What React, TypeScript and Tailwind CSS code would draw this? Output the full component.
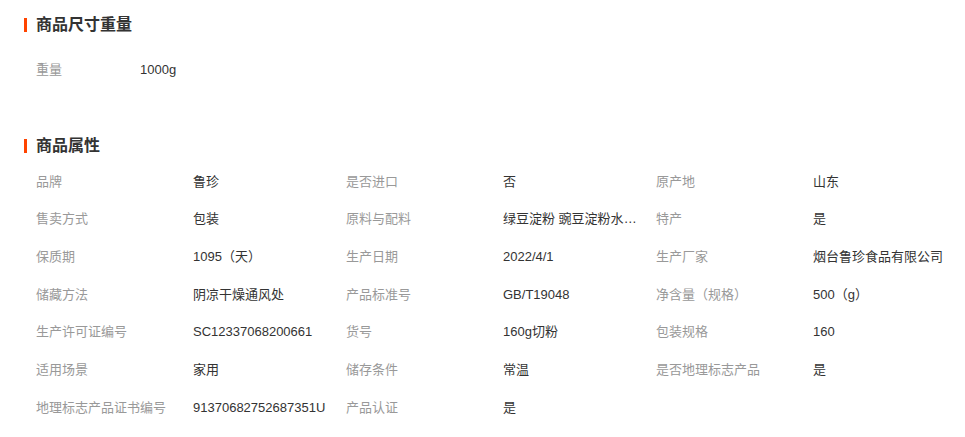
import React from "react";

const font = { fontFamily: '"Liberation Sans", "Noto Sans CJK SC", sans-serif' };

const rows: [string, string][] = [
  ["品牌", "鲁珍"],
  ["是否进口", "否"],
  ["原产地", "山东"],
  ["售卖方式", "包装"],
  ["原料与配料", "绿豆淀粉 豌豆淀粉水 食用盐"],
  ["特产", "是"],
  ["保质期", "1095（天）"],
  ["生产日期", "2022/4/1"],
  ["生产厂家", "烟台鲁珍食品有限公司"],
  ["储藏方法", "阴凉干燥通风处"],
  ["产品标准号", "GB/T19048"],
  ["净含量（规格）", "500（g）"],
  ["生产许可证编号", "SC12337068200661"],
  ["货号", "160g切粉"],
  ["包装规格", "160"],
  ["适用场景", "家用"],
  ["储存条件", "常温"],
  ["是否地理标志产品", "是"],
  ["地理标志产品证书编号", "91370682752687351U"],
  ["产品认证", "是"],
];

function Title({ text }: { text: string }) {
  return (
    <div className="flex items-center h-[18px] pl-[24px]">
      <div className="w-[3px] h-[14px] bg-[#ff4400]" />
      <div className="ml-[9px] text-[16px] font-bold text-[#333] leading-[18px]">{text}</div>
    </div>
  );
}

function Cell({ label, value, narrow = false }: { label: string; value: string; narrow?: boolean }) {
  const long = value.length > 12 && /[\u4e00-\u9fa5] /.test(value);
  return (
    <div className="flex items-center h-[37.67px] text-[13px]">
      <div className={narrow ? "w-[104px] text-[#999] shrink-0 whitespace-nowrap" : "w-[157px] text-[#999] shrink-0 whitespace-nowrap"}>{label}</div>
      <div className={long ? "w-[137px] text-[#333] truncate whitespace-nowrap" : "text-[#333] whitespace-nowrap"}>{value}</div>
    </div>
  );
}

export default function App() {
  return (
    <div className="w-[965px] h-[437px] bg-white pt-[16px] overflow-hidden" style={font}>
      <Title text="商品尺寸重量" />
      <div className="mt-[17px] pl-[36px]">
        <Cell label="重量" value="1000g" narrow />
      </div>
      <div className="mt-[48px]">
        <Title text="商品属性" />
        <div className="mt-[8px] pl-[36px] grid grid-cols-[310px_310px_310px]">
          {rows.map(([l, v], i) => (
            <Cell key={i} label={l} value={v} />
          ))}
        </div>
      </div>
    </div>
  );
}
